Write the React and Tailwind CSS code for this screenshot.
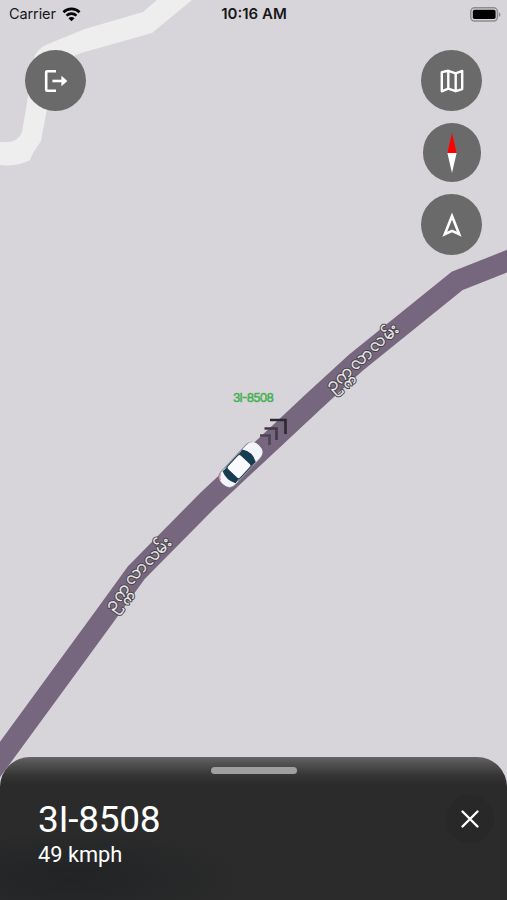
import clsx from "clsx";

const VEHICLE = { plate: "3I-8508", speed: "49 kmph" };
const ROAD_NAME = "ဥက္ကလာလမ်း";

function WifiIcon() {
  return (
    <svg width="19" height="15" viewBox="0 0 20 15" fill="none" stroke="#050505" strokeWidth="2.7">
      <path d="M1.5 5.1a12.1 12.1 0 0 1 17 0" />
      <path d="M4.8 8.7a7.4 7.4 0 0 1 10.4 0" />
      <path d="M10 14.6 6.8 11.4a4.5 4.5 0 0 1 6.4 0z" fill="#050505" stroke="none" />
    </svg>
  );
}

function BatteryIcon() {
  return (
    <svg width="31" height="15" viewBox="0 0 31 15">
      <rect x=".8" y=".8" width="26.6" height="13.2" rx="3.8" fill="none" stroke="#8e8c90" strokeWidth="1.5" />
      <rect x="2.8" y="2.8" width="22.8" height="9.2" rx="1.8" fill="#000" />
      <path d="M28.8 5.2c2.2.8 2.2 3.8 0 4.6z" fill="#8e8c90" />
    </svg>
  );
}

function StatusBar() {
  return (
    <header className="grid h-7 grid-cols-3 items-center pr-1.5 pl-[9px] text-[14.5px] text-[#171719]">
      <div className="flex items-center gap-1.5">
        <span className="tracking-[-0.1px]">Carrier</span>
        <WifiIcon />
      </div>
      <span className="pr-[2px] text-center text-[15px] font-semibold">10:16 AM</span>
      <div className="flex justify-end">
        <BatteryIcon />
      </div>
    </header>
  );
}

function RoundButton({ label, small, children }) {
  return (
    <button
      type="button"
      aria-label={label}
      className={clsx(
        "grid place-items-center rounded-full bg-[#6a6a6a] text-white",
        small ? "h-[59px] w-[58px]" : "size-[61px]",
      )}
    >
      {children}
    </button>
  );
}

function ExitIcon() {
  return (
    <svg width="24" height="24" viewBox="0 0 24 24" fill="none" stroke="currentColor" strokeWidth="2.6">
      <path d="M12 2.2H3.4q-1.2 0-1.2 1.2v17.2q0 1.2 1.2 1.2H12" />
      <path d="M8.4 12H20" />
      <path d="m17.4 6.8 6 5.2-6 5.2z" fill="currentColor" stroke="none" />
    </svg>
  );
}

function MapIcon() {
  return (
    <svg width="24" height="24" viewBox="0 0 24 24" fill="none" stroke="currentColor" strokeWidth="2.4" strokeLinejoin="round">
      <path d="m1.8 3.1 6.5-1.3 7.4 2.5 6.5-2.4v18.2l-6.5 2.1-7.4-2.6-6.5 2.7z" />
      <path d="M8.3 1.8v17.8M15.7 4.3v17.9" />
    </svg>
  );
}

function CompassNeedle() {
  return (
    <svg width="10" height="40" viewBox="0 0 10 40">
      <path d="M5 0 9.6 20H.4z" fill="#fe0000" />
      <path d="M5 40 9.6 20H.4z" fill="#fff" />
    </svg>
  );
}

function NavigationIcon() {
  return (
    <svg width="20" height="24" viewBox="0 0 20 24" fill="none" stroke="currentColor" strokeWidth="2.6">
      <path d="m10 3 7.2 18.2-7.2-3.3-7.2 3.3z" />
    </svg>
  );
}

function RoadLabel({ id, path }) {
  return (
    <g fontSize="18.5" letterSpacing="1.1" strokeLinejoin="round">
      <path id={id} d={path} fill="none" />
      <text fill="#454247" stroke="#454247" strokeWidth="2.4">
        <textPath href={`#${id}`}>{ROAD_NAME}</textPath>
      </text>
      <text fill="#f2f0f2" stroke="#f2f0f2" strokeWidth=".35" aria-hidden="true">
        <textPath href={`#${id}`}>{ROAD_NAME}</textPath>
      </text>
    </g>
  );
}

function Car() {
  return (
    <g transform="translate(240.5 465) rotate(43) scale(1.08)">
      <path d="M-9.4-18q1-7 9.4-7t9.4 7v35q0 7-9.4 7t-9.4-7z" fill="#8b8993" />
      <path d="M-8.6-17q0-8 8.6-8t8.6 8v33q0 8-8.6 8t-8.6-8z" fill="#f4f5fa" />
      <path d="M-8.6-11.5Q0-17 8.6-11.5L7.6-4H-7.6zM-7.6 9H7.6l.6 6.5Q0 19.5-8.2 15.5z" fill="#173c50" />
      <path d="M-8.6-9.5-7.4-4V9l-1.1 4zM8.6-9.5 7.4-4V9l1.1 4z" fill="#173c50" />
      <rect x="-7.4" y="-6.5" width="14.8" height="17" rx="1.5" fill="#f9f9fe" />
      <path d="M-8 18.5q1 3.5 4 4.5" fill="none" stroke="#d88793" strokeWidth="1" />
    </g>
  );
}

function MapCanvas() {
  return (
    <svg className="absolute inset-0" width="507" height="900" viewBox="0 0 507 900">
      <path
        d="M157 0 143 12 85 29 48 44 Q35 49 33 62L27 103 22 132Q18 144 0 142V165Q18 167 30 160L33 153 41 141 47 109 53 64 81 53 152 33 192 0z"
        fill="#efeeef"
      />
      <path
        d="M-15 780 102 620 136 573 208 500 314 401 356 362.5 457 281 520 256"
        fill="none"
        stroke="#76677e"
        strokeWidth="21"
      />
      <RoadLabel id="road-name-north" path="M332 392 345 380.5 358.5 368 369.5 358 381.5 347 415 318" />
      <RoadLabel id="road-name-south" path="M113.5 612 124 597.5Q135 581 146 570T187 529" />
      <g fill="none" strokeWidth="2.6">
        <path d="M260 435.5h9.5v9.5" stroke="#4e4455" />
        <path d="M264.5 428.5h12v11.5" stroke="#403946" />
        <path d="M270 420h15.5v14" stroke="#2c2831" />
      </g>
      <Car />
      <text x="253.5" y="402" textAnchor="middle" fontSize="12" fill="#46b150" stroke="#46b150" strokeWidth=".5" textLength="41">
        {VEHICLE.plate}
      </text>
    </svg>
  );
}

function VehicleSheet() {
  return (
    <section className="relative h-[143px] rounded-t-[30px] bg-[#2b2b2b] bg-[linear-gradient(to_bottom,#646464_0px,#505050_7px,#363636_18px,#2b2b2b_28px,transparent_29px),radial-gradient(ellipse_at_14%_85%,#212325_0%,#2b2b2b_30%)] pt-[10px] font-[Roboto,sans-serif] text-white">
      <div className="mx-auto h-[7px] w-[86px] rounded-full bg-[#a0a0a0]" />
      <div className="mt-[20px] flex items-start justify-between pr-[13px] pl-[38px]">
        <div>
          <h1 className="pt-px text-[37px] leading-[50px] tracking-[-0.3px]">{VEHICLE.plate}</h1>
          <p className="text-[21.8px] leading-[20px]">{VEHICLE.speed}</p>
        </div>
        <button
          type="button"
          aria-label="Close"
          className="mt-px grid size-12 place-items-center rounded-full bg-[#282828]"
        >
          <svg width="20" height="20" viewBox="0 0 20 20" fill="none" stroke="currentColor" strokeWidth="2.4" strokeLinecap="round">
            <path d="m2.5 2.5 15 15M17.5 2.5l-15 15" />
          </svg>
        </button>
      </div>
    </section>
  );
}

export default function App() {
  return (
    <main className="relative flex h-[900px] w-[507px] flex-col overflow-hidden bg-[#d8d5da] font-[Inter,sans-serif]">
      <MapCanvas />
      <div className="relative flex grow flex-col">
        <StatusBar />
        <div className="mt-[22px] flex items-start justify-between pr-[25px] pl-[25px]">
          <RoundButton label="Exit">
            <ExitIcon />
          </RoundButton>
          <div className="flex flex-col items-center gap-3">
            <RoundButton label="Map type">
              <MapIcon />
            </RoundButton>
            <RoundButton label="Compass" small>
              <CompassNeedle />
            </RoundButton>
            <RoundButton label="Follow vehicle">
              <NavigationIcon />
            </RoundButton>
          </div>
        </div>
      </div>
      <VehicleSheet />
    </main>
  );
}
